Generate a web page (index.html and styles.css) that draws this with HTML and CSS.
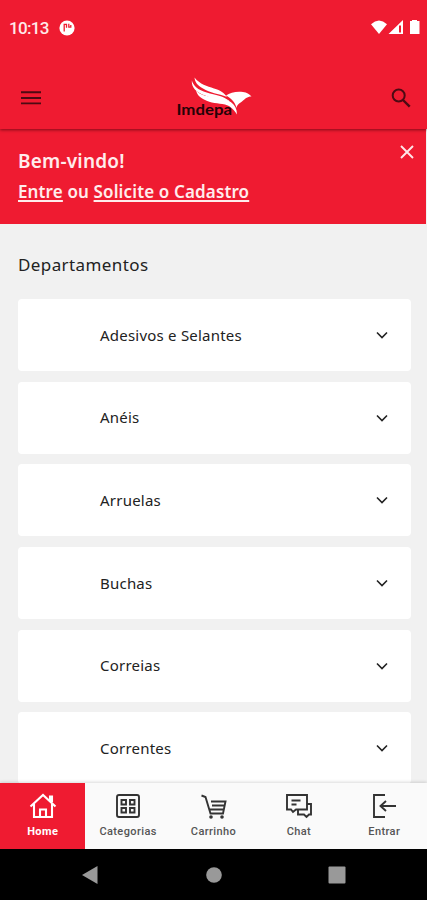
FILE: index.html
```html
<!DOCTYPE html>
<html lang="pt-BR">
<head>
<meta charset="utf-8">
<meta name="viewport" content="width=device-width, initial-scale=1">
<title>Imdepa</title>
<link rel="stylesheet" href="styles.css">
</head>
<body>
<div class="phone">
  <header class="top">
    <div class="status">
      <span class="clock">10:13</span>
      <svg class="notif" width="16" height="16" viewBox="0 0 16 16"><circle cx="8" cy="8" r="7.6" fill="#fff"/><path d="M5.200 11.500V4.300H7.500v3.500M9.800 3.800v3.400h2V5" fill="none" stroke="#ef1b31" stroke-width="1.300"/></svg>
      <svg class="signals" width="50" height="16" viewBox="0 0 50 16" fill="#fff"><path d="M0 4.2Q8-3.2 16 4.2L8 14z"/><path fill-rule="evenodd" d="M17.500 14 32 0v14zM28 5.500V12.500h2V5.500z"/><path d="M41 0h5v1h2.500v13h-9.500V1h2z"/></svg>
    </div>
    <div class="bar">
      <svg width="20" height="14" viewBox="0 0 20 14" fill="none" stroke="#4d0a13" stroke-width="1.9"><path d="M0 1.300h20M0 7h20M0 12.400h20"/></svg>
      <svg class="logo" width="76" height="44" viewBox="0 0 76 44">
        <g fill="#fff">
          <path d="M18.500 1.500C24 8.500 31 10 38 12.500 45 14.500 48 17 51 21 42 17.500 34 17 27 12.500 21 9 19 6 18.500 1.500z"/>
          <path d="M15.800 4.500C18 12 25 15 34 17.500 43 19.500 49 21 54 25.500 45 22.500 37 23 29 19.500 20 16 15.500 12 15.800 4.500z"/>
          <path d="M20 14.500C25 20 32 20.500 41 21.500 52 23 61 27 61 38.500 58 34 55 30 49 28.500 42 27 35 27.500 28 23.500 23 21 21 18 20 14.500z"/>
          <path d="M50 19.500C54 16.500 61 15 67 16 71 16.500 73 18 75.500 20.500 71 20.500 69 23 66 25.500 62 28 61 29.500 60.500 32 59 26 55 22 50 19.500z"/>
        </g>
        <text x="0.500" y="38.500" textLength="55.500" lengthAdjust="spacingAndGlyphs">Imdepa</text>
      </svg>
      <svg width="20" height="20" viewBox="0 0 20 20" fill="none" stroke="#4d0a13" stroke-width="2"><circle cx="7.700" cy="7.500" r="6"/><path d="m12 12 6.700 6.700" stroke-width="2.400"/></svg>
    </div>
  </header>
  <section class="welcome">
    <div>
      <h1>Bem-vindo!</h1>
      <p><a>Entre</a> ou <a>Solicite o Cadastro</a></p>
    </div>
    <svg class="close" width="14" height="14" viewBox="0 0 14 14" fill="none" stroke="#ffe6e8" stroke-width="1.900"><path d="m1 1 12 12M13 1 1 13"/></svg>
  </section>
  <main>
    <h2><span>Departamentos</span></h2>
    <div class="list">
      <div class="card"><span>Adesivos e Selantes</span><svg class="chev" viewBox="0 0 12 8"><path d="m1 1.500 5 5 5-5"/></svg></div>
      <div class="card"><span>Anéis</span><svg class="chev" viewBox="0 0 12 8"><path d="m1 1.500 5 5 5-5"/></svg></div>
      <div class="card"><span>Arruelas</span><svg class="chev" viewBox="0 0 12 8"><path d="m1 1.500 5 5 5-5"/></svg></div>
      <div class="card"><span>Buchas</span><svg class="chev" viewBox="0 0 12 8"><path d="m1 1.500 5 5 5-5"/></svg></div>
      <div class="card"><span>Correias</span><svg class="chev" viewBox="0 0 12 8"><path d="m1 1.500 5 5 5-5"/></svg></div>
      <div class="card"><span>Correntes</span><svg class="chev" viewBox="0 0 12 8"><path d="m1 1.500 5 5 5-5"/></svg></div>
    </div>
  </main>
  <nav class="tabs">
    <div class="tab active"><svg viewBox="0 0 28 26"><path d="M1.500 13.500 14 2l12.500 11.500M5 11v13h18V11M11 24v-7.500h6V24M21 8V3.500h2V9"/></svg><span>Home</span></div>
    <div class="tab"><svg viewBox="0 0 28 26"><rect x="3" y="2" width="22" height="22" rx="2"/><path d="M7.500 7H12v4.500H7.500zM16 7h4.500v4.500H16zM7.500 15H12v4.500H7.500zM16 15h4.500v4.500H16z"/></svg><span>Categorias</span></div>
    <div class="tab"><svg viewBox="0 0 28 26"><path d="M2.500 2.500 6.500 4l5 16.500H24l2.500-12H12M13 12.500h12M11 16.500h13.500"/><g class="dot"><circle cx="12" cy="24" r="1.800"/><circle cx="23" cy="24" r="1.800"/></g></svg><span>Carrinho</span></div>
    <div class="tab"><svg viewBox="0 0 28 26"><path d="M2 2h20v14.500H11L8 19l-2-2.500H2zM6.500 7.500h9M6.500 11.500h5M22 11h4v10.500h-2L21.500 24 19 21.500h-6v-5"/></svg><span>Chat</span></div>
    <div class="tab"><svg viewBox="0 0 28 26"><path d="M15 2H4v22h11M26 13H10M16 8l-5.500 5 5.500 5"/></svg><span>Entrar</span></div>
  </nav>
  <footer class="system">
    <svg width="18" height="20" viewBox="0 0 18 20"><path d="M1 10 16.500 1v18z"/></svg>
    <svg width="16" height="16" viewBox="0 0 16 16"><circle cx="8" cy="8" r="7.800"/></svg>
    <svg width="18" height="18" viewBox="0 0 18 18"><rect x=".5" y=".5" width="17" height="17" rx="1"/></svg>
  </footer>
</div>
</body>
</html>
```
FILE: styles.css
```css
* { box-sizing: border-box; }
body { margin: 0; font-family: "Noto Sans", sans-serif; }
svg { display: block; flex: none; }
.phone { width: 427px; height: 900px; overflow: hidden; display: flex; flex-direction: column; background: #f1f1f1; }
.top { height: 129px; flex: none; background: #ef1b31; color: #fff; position: relative; box-shadow: 0 1px 3px rgba(70, 0, 10, .65); }
.status { height: 55px; padding: 0 7px 0 9px; display: flex; align-items: center; }
.clock { font: 500 17px/20px Roboto, sans-serif; width: 50px; color: #ffe9e9; letter-spacing: -.7px; }
.signals { margin-left: auto; margin-right: -1px; }
.bar { height: 74px; padding: 12px 16px 0 21px; display: flex; align-items: center; justify-content: space-between; }
.logo { margin: 0 4px 0 0; }
.logo text { font: 700 15.5px Lato, sans-serif; fill: #250207; }
.welcome { height: 95px; flex: none; margin-right: 1px; padding: 19px 12px 0 18px; background: #ef1b31; color: #ffecec; display: flex; justify-content: space-between; }
.welcome h1 { margin: 0; font-size: 19px; line-height: 27px; font-weight: 600; letter-spacing: .2px; }
.welcome p { margin: 5px 0 0; font-size: 17px; line-height: 24px; font-weight: 600; letter-spacing: .13px; }
.welcome a { text-decoration: underline; text-decoration-thickness: 2px; text-underline-offset: 2px; }
.close { margin-top: -3px; }
main { flex: 1; min-height: 0; overflow: hidden; padding: 29px 16px 0 18px; }
h2 { margin: 0 0 22px; font-size: 17px; line-height: 24px; font-weight: 450; letter-spacing: .4px; color: #222; }
.list { display: grid; gap: 10.700px; }
.card { height: 72px; background: #fff; border-radius: 4px; display: flex; align-items: center; justify-content: space-between; padding: 0 23px 0 82px; font-size: 15px; font-weight: 450; letter-spacing: .22px; color: #222; }
.card span { margin-top: -1px; }
.chev { width: 12px; height: 8px; fill: none; stroke: #222; stroke-width: 1.600; }
.tabs { height: 66px; flex: none; display: grid; grid-template-columns: repeat(5, 1fr); background: #fafafa; position: relative; box-shadow: 0 -1px 3px rgba(0, 0, 0, .15); }
.tab { display: flex; flex-direction: column; align-items: center; padding-top: 11px; font: 500 11px/14px Roboto, sans-serif; letter-spacing: .4px; color: #555; }
.tab svg { width: 28px; height: 26px; margin: -1px 0 6px; fill: none; stroke: #333; stroke-width: 1.900; }
.tab .dot { fill: #333; stroke: none; }
.tab.active { background: #ef1b31; color: #fff; font-weight: 700; }
.tab.active svg { stroke: #fff; stroke-width: 2.100; }
.system { height: 51px; flex: none; background: #000; display: flex; align-items: center; justify-content: space-between; padding: 0 81px; }
.system svg { fill: #999; }
```
